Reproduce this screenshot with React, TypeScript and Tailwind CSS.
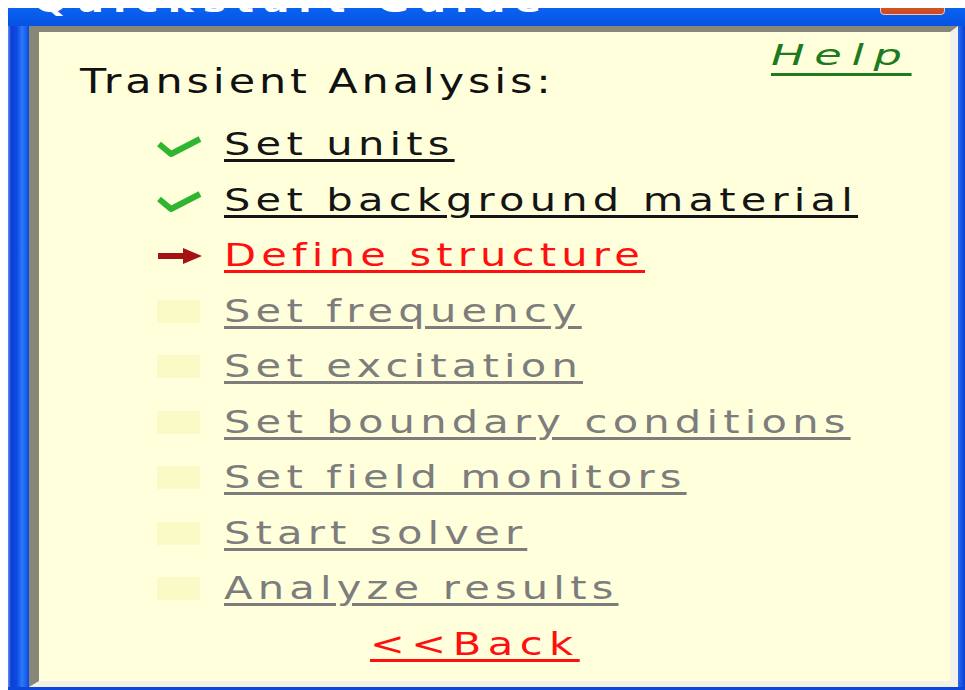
import React from "react";

type StepState = "done" | "current" | "pending";

const steps: { label: string; state: StepState }[] = [
  { label: "Set units", state: "done" },
  { label: "Set background material", state: "done" },
  { label: "Define structure", state: "current" },
  { label: "Set frequency", state: "pending" },
  { label: "Set excitation", state: "pending" },
  { label: "Set boundary conditions", state: "pending" },
  { label: "Set field monitors", state: "pending" },
  { label: "Start solver", state: "pending" },
  { label: "Analyze results", state: "pending" },
];

function CheckMark() {
  return (
    <svg width="48" height="22" viewBox="0 0 48 22" className="mt-[4px]">
      <polyline
        points="4,8 16,18 45,3"
        fill="none"
        stroke="#2fb52f"
        strokeWidth="6"
        strokeLinejoin="round"
      />
    </svg>
  );
}

function CurrentArrow() {
  return (
    <svg width="48" height="16" viewBox="0 0 48 16">
      <rect x="3" y="5" width="28" height="6" fill="#a31313" />
      <polygon points="28,0 47,8 28,16" fill="#a31313" />
    </svg>
  );
}

function StepIcon({ state }: { state: StepState }) {
  if (state === "done") return <CheckMark />;
  if (state === "current") return <CurrentArrow />;
  return <div className="ml-[2px] h-[23px] w-[43px] bg-[#fafac6]" />;
}

const textColor: Record<StepState, string> = {
  done: "text-[#151515] decoration-[#151515]",
  current: "text-[#ff1010] decoration-[#ff1010]",
  pending: "text-[#7d7d7d] decoration-[#7d7d7d]",
};

export default function App() {
  return (
    <div className="flex h-[690px] w-[965px] flex-col overflow-hidden bg-white pl-[8px] pt-[8px] font-['DejaVu_Sans',sans-serif]">
      <div className="flex flex-1 flex-col bg-[#0a4fe0]">
        {/* title bar, cut off at the top */}
        <div className="flex h-[18px] items-start overflow-hidden bg-gradient-to-b from-[#0a62f2] to-[#0752e2]">
          <span className="ml-[26px] mt-[-21px] origin-left scale-x-[1.3] whitespace-nowrap text-[30px] font-bold leading-[30px] tracking-[7px] text-white">
            Quickstart Guide
          </span>
          <div className="ml-auto mr-[20px] mt-[-19px] h-[26px] w-[65px] shrink-0 rounded-b-[4px] border border-[#f3c7b5] bg-gradient-to-b from-[#e4673f] to-[#cc4a22]" />
        </div>

        <div className="flex min-h-0 flex-1">
          <div className="w-[21px] bg-[linear-gradient(90deg,#6d8fe8_0px,#0a3fd9_3px,#0d4ae0_9px,#2b7af7_14px,#1a5ff0_18px,#0a47d8_21px)]" />

          <div className="flex min-w-0 flex-1 flex-col border-b-[6px] border-l-[10px] border-r-[8px] border-t-[6px] border-b-[#f2f1ea] border-l-[#878778] border-r-[#f2f1ea] border-t-[#878778] bg-[#ffffdb]">
            <div className="flex items-start justify-between pl-[41px] pr-[91px] pt-[10px]">
              <h1 className="mt-[23px] origin-left scale-x-[1.3] whitespace-nowrap text-[33px] font-normal leading-[33px] tracking-[3px] text-[#111]">
                Transient Analysis:
              </h1>
              <a className="origin-left scale-x-[1.6] whitespace-nowrap text-[28px] italic leading-[28px] tracking-[6px] text-[#1d7a1d] underline decoration-[3px] underline-offset-[8px]">
                Help
              </a>
            </div>

            <ul className="mt-[19px] flex flex-col">
              {steps.map((step) => (
                <li key={step.label} className="flex h-[55.5px] items-center pl-[116px]">
                  <div className="flex w-[69px] shrink-0 items-center">
                    <StepIcon state={step.state} />
                  </div>
                  <span
                    className={`origin-left scale-x-[1.3] whitespace-nowrap text-[32px] leading-[37px] tracking-[4px] underline decoration-[3px] underline-offset-[4px] ${textColor[step.state]}`}
                  >
                    {step.label}
                  </span>
                </li>
              ))}
              <li className="flex h-[55.5px] items-center pl-[331px]">
                <span className="origin-left scale-x-[1.3] whitespace-nowrap text-[32px] leading-[37px] tracking-[5px] text-[#ff1010] underline decoration-[#ff1010] decoration-[3px] underline-offset-[4px]">
                  &lt;&lt;Back
                </span>
              </li>
            </ul>
          </div>

          <div className="w-[7px] bg-gradient-to-r from-[#2a6cf0] to-[#0a3fd0]" />
        </div>

        <div className="h-[3px] bg-[#0a47d8]" />
      </div>
    </div>
  );
}
